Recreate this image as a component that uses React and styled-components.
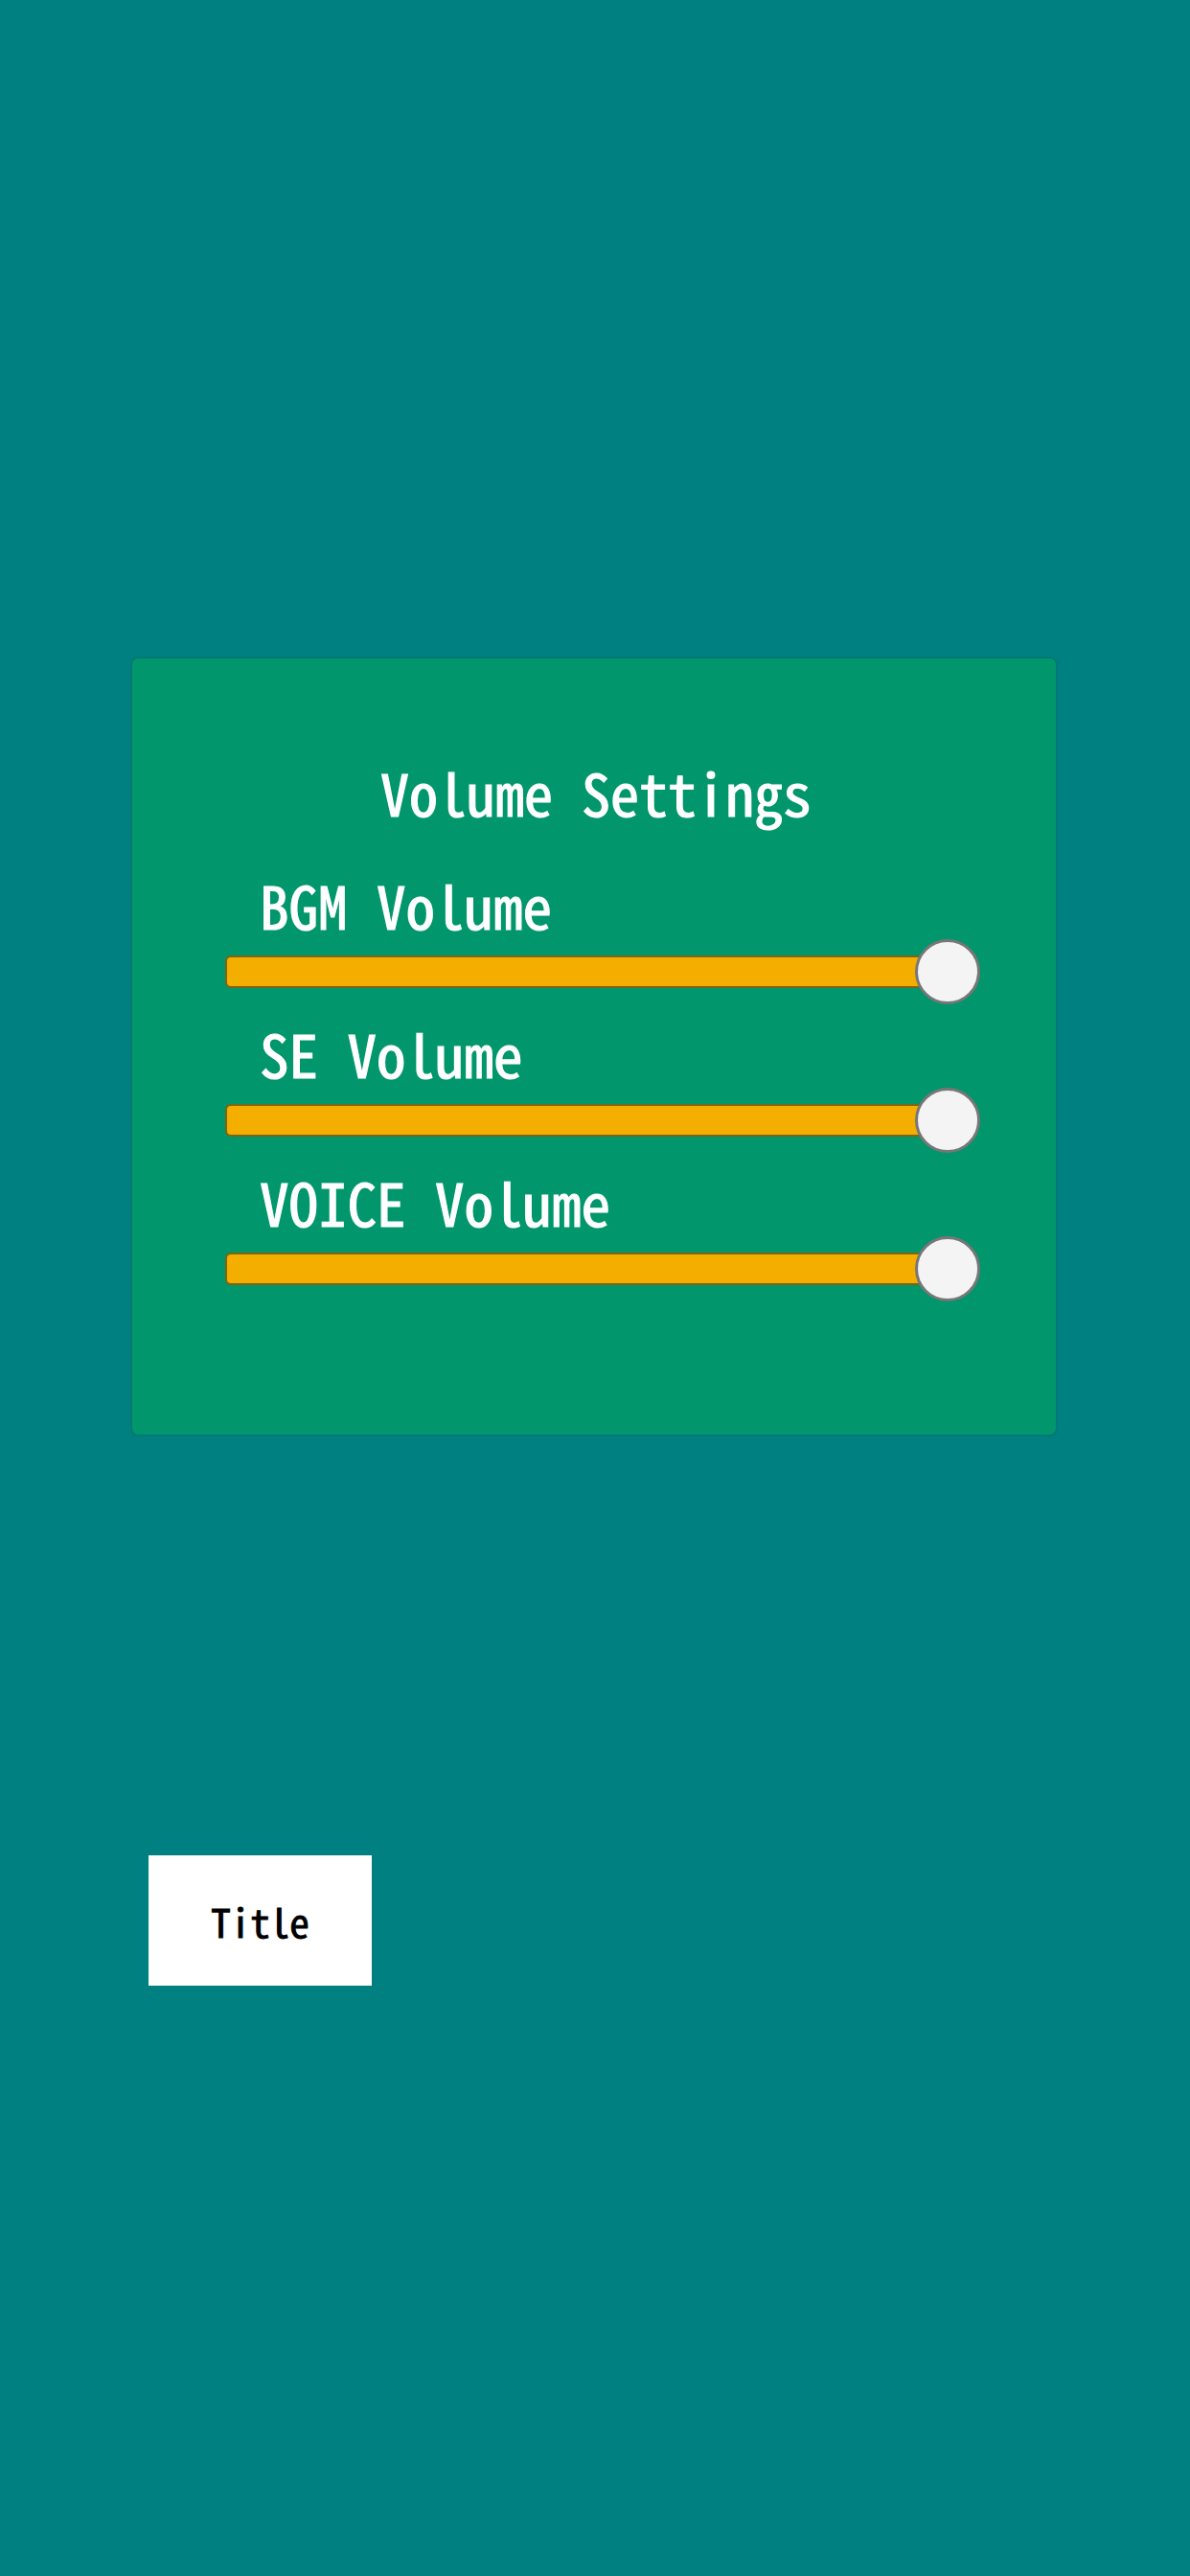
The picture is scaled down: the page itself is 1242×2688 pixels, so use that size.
import * as React from 'react';
import styled, { createGlobalStyle } from 'styled-components';

const sliders = [
    { key: 'bgm', label: 'BGM Volume', value: 100 },
    { key: 'se', label: 'SE Volume', value: 100 },
    { key: 'voice', label: 'VOICE Volume', value: 100 },
];

export default function App() {
    return (
        <>
            <Global />
            <Page>
                <Panel>
                    <Heading>Volume Settings</Heading>
                    <List>
                        {sliders.map((s) => (
                            <Item key={s.key}>
                                <Label>{s.label}</Label>
                                <SliderRow>
                                    <Track />
                                    <Thumb style={{ left: `${(s.value / 100) * 720}px` }} />
                                </SliderRow>
                            </Item>
                        ))}
                    </List>
                </Panel>
                <TitleButton>Title</TitleButton>
            </Page>
        </>
    );
}

//styling...

const font = `"Noto Sans Mono CJK JP", "Noto Sans CJK JP", "DejaVu Sans Mono", monospace`;

const Global = createGlobalStyle`
    html, body {
        margin: 0;
        padding: 0;
        background: #008080;
    }
    body {
        font-family: ${font};
    }
`;

const Page = styled.div`
    min-height: 2688px;
    padding: 687px 0 0 138px;
    box-sizing: border-box;
    background: #008080;
    display: flex;
    flex-direction: column;
    align-items: flex-start;
`;

const Panel = styled.div`
    width: 964px;
    height: 810px;
    box-sizing: border-box;
    padding: 107px 0 0 97px;
    background: #01966c;
    border-radius: 6px;
    box-shadow: 0 0 3px rgba(0, 60, 50, 0.45);
    display: flex;
    flex-direction: column;
`;

const Heading = styled.h1`
    margin: 0 0 0 -95px;
    width: 964px;
    text-align: center;
    font-family: ${font};
    font-size: 60px;
    line-height: 64px;
    height: 64px;
    font-weight: 400;
    color: #fff;
    -webkit-text-stroke: 1.2px #fff;
`;

const List = styled.div`
    margin-top: 54px;
    display: flex;
    flex-direction: column;
    gap: 19px;
`;

const Item = styled.div`
    display: flex;
    flex-direction: column;
    gap: 4px;
`;

const Label = styled.div`
    padding-left: 36px;
    font-family: ${font};
    font-size: 61px;
    line-height: 64px;
    height: 64px;
    color: #fff;
    white-space: pre;
    -webkit-text-stroke: 1.2px #fff;
`;

const SliderRow = styled.div`
    position: relative;
    width: 788px;
    height: 68px;
    display: flex;
    align-items: center;
`;

const Track = styled.div`
    width: 765px;
    height: 34px;
    box-sizing: border-box;
    background: #f3ae00;
    border: 2px solid #7d6512;
    border-radius: 6px;
`;

const Thumb = styled.div`
    position: absolute;
    top: 0;
    width: 68px;
    height: 68px;
    box-sizing: border-box;
    border-radius: 50%;
    background: #f4f4f4;
    border: 3px solid #777;
`;

const TitleButton = styled.button`
    margin: 439px 0 0 17px;
    width: 233px;
    height: 136px;
    border: none;
    background: #fff;
    color: #000;
    font-family: ${font};
    font-size: 41px;
    padding: 0;
    display: flex;
    align-items: center;
    justify-content: center;
    cursor: pointer;
    -webkit-text-stroke: 1px #000;
`;
